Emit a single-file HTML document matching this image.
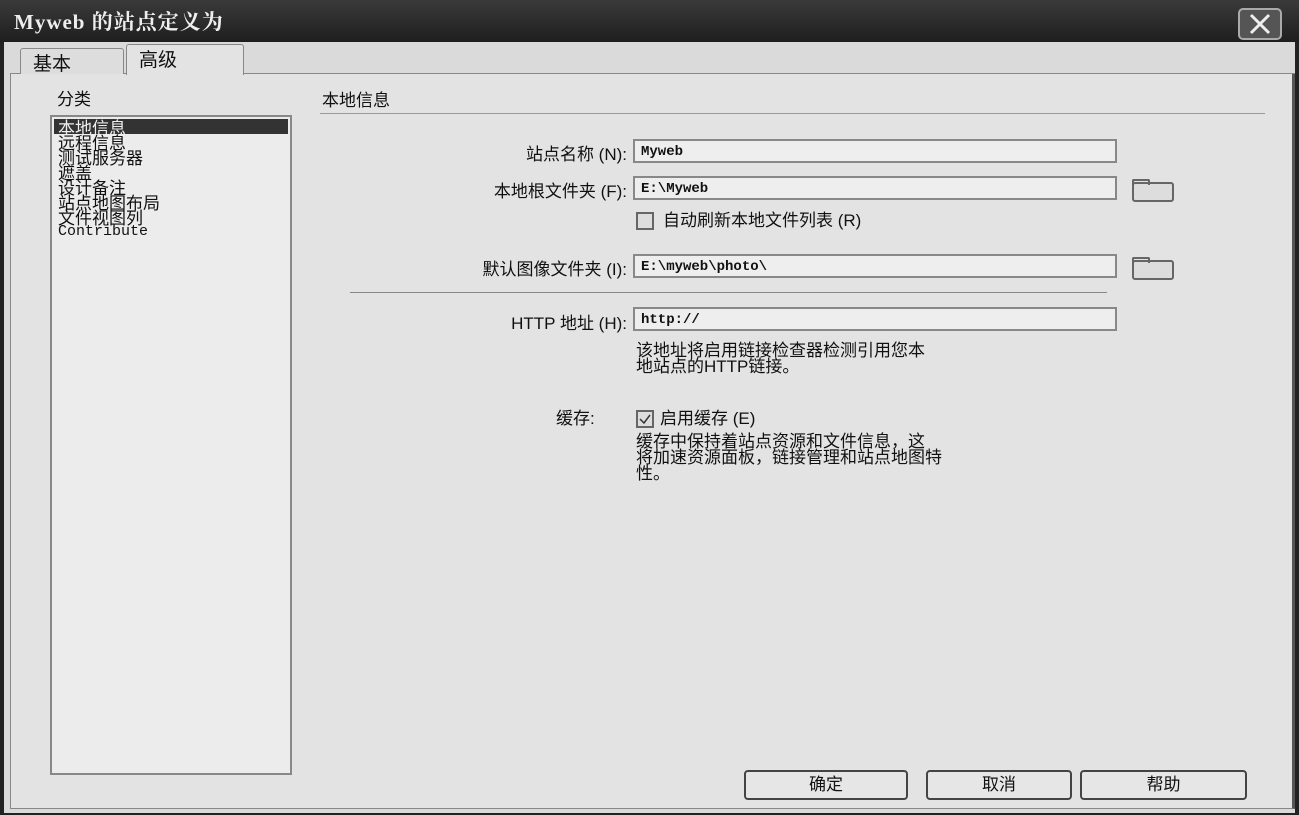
<!DOCTYPE html>
<html><head><meta charset="utf-8"><style>
body{margin:0;width:1299px;height:815px;background:#222;position:relative;overflow:hidden;font-family:"Liberation Sans","Noto Sans CJK SC",sans-serif;color:#111}
.a{position:absolute}
.title{left:0;top:0;width:1299px;height:42px;background:linear-gradient(#3a3a3a,#1e1e1e)}
.tt{left:14px;top:6px;color:#eee;font-size:21px;font-weight:bold;font-family:"Liberation Serif","Noto Serif CJK SC",serif;letter-spacing:1px}
.close{left:1238px;top:8px;width:40px;height:28px;border:2px solid #aaa;border-radius:5px;background:#555}
.body{left:4px;top:42px;width:1291px;height:771px;background:#dadada}
.panel{left:10px;top:73px;width:1285px;height:736px;background:#e3e3e3;border:1px solid #888;border-right:3px solid #555;box-sizing:border-box}
.tab{height:30px;border:1px solid #888;border-bottom:none;font-size:19px;padding:0 0 0 12px;box-sizing:border-box;border-radius:3px 3px 0 0}
.list{left:50px;top:115px;width:242px;height:660px;background:#ececec;border:2px solid #888;box-sizing:border-box;font-size:17px;line-height:15px}
.list div{padding-left:6px;font-family:"Noto Sans CJK SC",sans-serif;}
.lbl{font-size:17px;text-align:right;width:260px;font-family:"Liberation Sans","Noto Sans CJK SC",sans-serif}
.in{left:633px;width:484px;height:24px;border:2px solid #888;background:#eee;box-sizing:border-box;font-family:"Liberation Mono",monospace;font-weight:bold;font-size:14px;padding:3px 6px}
.fold{left:1132px;width:38px;height:16px;border:2px solid #666;border-radius:3px;background:#ddd}
.fold:before{content:"";position:absolute;left:-2px;top:-5px;width:14px;height:4px;border:2px solid #666;border-bottom:none;border-radius:2px 2px 0 0}
.btn{top:770px;height:30px;border:2px solid #444;border-radius:4px;background:#e6e6e6;box-sizing:border-box;text-align:center;font-size:17px;line-height:26px}
.cb{width:18px;height:18px;border:2px solid #666;background:#ddd;box-sizing:border-box}
.t{font-size:17px;line-height:17px}
</style></head><body>
<div class="a title"></div>
<div class="a tt">Myweb 的站点定义为</div>
<div class="a close"><svg width="40" height="28"><path d="M11 5L29 23M29 5L11 23" stroke="#eee" stroke-width="3"/></svg></div>
<div class="a body"></div>
<div class="a panel"></div>
<div class="a tab" style="left:20px;width:104px;background:#ddd;top:48px;height:26px">基本</div>
<div class="a tab" style="left:126px;top:44px;width:118px;background:#e3e3e3;height:31px">高级</div>
<div class="a" style="left:245px;top:73px;width:1050px;height:1px;background:#888"></div>
<div class="a t" style="left:57px;top:91px">分类</div>
<div class="a list"><div style="background:#333;color:#eee;margin:2px 2px 0;padding-left:4px">本地信息</div><div>远程信息</div><div>测试服务器</div><div>遮盖</div><div>设计备注</div><div>站点地图布局</div><div>文件视图列</div><div style="font-family:'Liberation Mono',monospace;font-size:15px">Contribute</div></div>
<div class="a t" style="left:322px;top:92px">本地信息</div>
<div class="a" style="left:320px;top:113px;width:945px;height:1px;background:#999"></div>
<div class="a lbl" style="left:367px;top:140px">站点名称 (N):</div>
<div class="a in" style="top:139px">Myweb</div>
<div class="a lbl" style="left:367px;top:177px">本地根文件夹 (F):</div>
<div class="a in" style="top:176px">E:\Myweb</div>
<div class="a fold" style="top:182px"></div>
<div class="a cb" style="left:636px;top:212px"></div>
<div class="a t" style="left:663px;top:212px">自动刷新本地文件列表 (R)</div>
<div class="a lbl" style="left:367px;top:255px">默认图像文件夹 (I):</div>
<div class="a in" style="top:254px">E:\myweb\photo\</div>
<div class="a fold" style="top:260px"></div>
<div class="a" style="left:350px;top:292px;width:757px;height:1px;background:#888"></div>
<div class="a lbl" style="left:367px;top:309px">HTTP 地址 (H):</div>
<div class="a in" style="top:307px">http://</div>
<div class="a t" style="left:636px;top:343px;line-height:16px">该地址将启用链接检查器检测引用您本<br>地站点的HTTP链接。</div>
<div class="a t" style="left:556px;top:410px">缓存:</div>
<div class="a cb" style="left:636px;top:410px"><svg width="14" height="14"><path d="M2 7L6 11L12 3" stroke="#333" stroke-width="1.5" fill="none"/></svg></div>
<div class="a t" style="left:660px;top:410px">启用缓存 (E)</div>
<div class="a t" style="left:636px;top:434px;line-height:16px">缓存中保持着站点资源和文件信息，这<br>将加速资源面板，链接管理和站点地图特<br>性。</div>
<div class="a btn" style="left:744px;width:164px">确定</div>
<div class="a btn" style="left:926px;width:146px">取消</div>
<div class="a btn" style="left:1080px;width:167px">帮助</div>
</body></html>
